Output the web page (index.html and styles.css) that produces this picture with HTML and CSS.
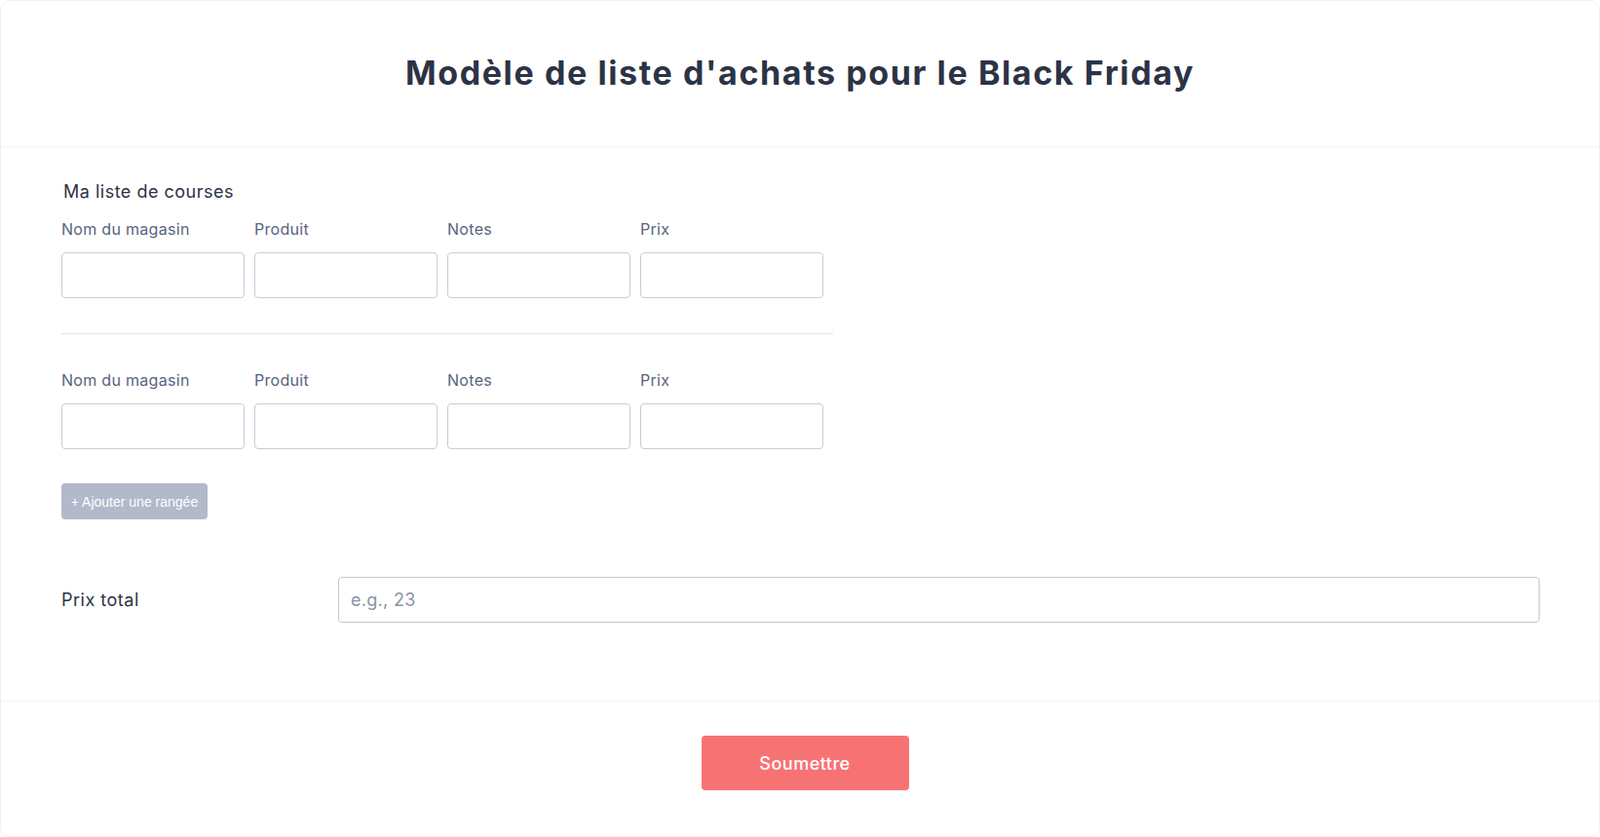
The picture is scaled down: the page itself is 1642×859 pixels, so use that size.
FILE: index.html
```html
<!DOCTYPE html>
<html lang="fr">
<head>
<meta charset="utf-8">
<title>Modèle de liste d'achats pour le Black Friday</title>
<link rel="stylesheet" href="styles.css">
</head>
<body>
<div class="card">
  <header class="header">
    <h1 class="title">Modèle de liste d'achats pour le Black Friday</h1>
  </header>
  <main class="content">
    <div class="matrix-title">Ma liste de courses</div>
    <div class="matrix-row">
      <div class="cell"><label class="cell-label">Nom du magasin</label><input class="cell-input" type="text"></div>
      <div class="cell"><label class="cell-label">Produit</label><input class="cell-input" type="text"></div>
      <div class="cell"><label class="cell-label">Notes</label><input class="cell-input" type="text"></div>
      <div class="cell"><label class="cell-label">Prix</label><input class="cell-input" type="text"></div>
    </div>
    <div class="matrix-divider"></div>
    <div class="matrix-row second">
      <div class="cell"><label class="cell-label">Nom du magasin</label><input class="cell-input" type="text"></div>
      <div class="cell"><label class="cell-label">Produit</label><input class="cell-input" type="text"></div>
      <div class="cell"><label class="cell-label">Notes</label><input class="cell-input" type="text"></div>
      <div class="cell"><label class="cell-label">Prix</label><input class="cell-input" type="text"></div>
    </div>
    <button class="add-row" type="button">+ Ajouter une rangée</button>
    <div class="total-row">
      <label class="total-label">Prix total</label>
      <input class="total-input" type="text" placeholder="e.g., 23">
    </div>
  </main>
  <footer class="footer">
    <button class="submit" type="button">Soumettre</button>
  </footer>
</div>
</body>
</html>
```

FILE: styles.css
```css
* { box-sizing: border-box; }

html, body {
  margin: 0;
  padding: 0;
  background: #ffffff;
}

body {
  font-family: Inter, "Noto Sans", sans-serif;
  color: #2c3345;
}

.card {
  width: 1642px;
  height: 859px;
  border: 1px solid #f0f0f9;
  border-radius: 10px;
  background: #ffffff;
  display: flex;
  flex-direction: column;
  overflow: hidden;
}

.header {
  height: 150px;
  flex: none;
  display: flex;
  align-items: center;
  justify-content: center;
  border-bottom: 1px solid #f3f3fe;
}

.title {
  margin: 0;
  font-size: 34px;
  line-height: 40px;
  font-weight: 700;
  letter-spacing: 1.6px;
  color: #2c3345;
  padding-bottom: 2px;
}

.content {
  flex: 1;
  padding: 34px 61px 0 62px;
}

.matrix-title {
  font-size: 18px;
  line-height: 24px;
  letter-spacing: 0.5px;
  color: #2c3345;
  padding-left: 2px;
  margin-bottom: 16px;
}

.matrix-row {
  display: flex;
  width: 792px;
}

.matrix-row.second {
  margin-top: 37px;
}

.cell {
  width: 198px;
  padding-right: 10px;
  display: flex;
  flex-direction: column;
}

.cell-label {
  font-size: 16px;
  line-height: 20px;
  letter-spacing: 0.3px;
  color: #57647e;
  margin-bottom: 14px;
}

.cell-input {
  width: 188px;
  height: 47px;
  border: 1px solid #c9ccd6;
  border-radius: 4px;
  background: #fff;
  font-family: inherit;
  font-size: 16px;
  outline: none;
}

.matrix-divider {
  width: 792px;
  height: 1px;
  background: #e3e5ec;
  margin-top: 36px;
}

.add-row {
  display: block;
  margin-top: 35px;
  width: 150px;
  height: 37px;
  border: none;
  border-radius: 4px;
  background: #b1b9cb;
  color: #ffffff;
  font-family: "Liberation Sans", Arial, sans-serif;
  font-size: 14px;
  padding: 0;
}

.total-row {
  display: flex;
  align-items: center;
  margin-top: 59px;
}

.total-label {
  width: 284px;
  flex: none;
  font-size: 18px;
  line-height: 24px;
  letter-spacing: 0.5px;
  padding-top: 1px;
  color: #2c3345;
}

.total-input {
  flex: 1;
  height: 47px;
  border: 1px solid #c3c7d2;
  border-radius: 4px;
  padding: 0 12px;
  font-family: inherit;
  font-size: 18px;
  letter-spacing: 0.3px;
  color: #2c3345;
  outline: none;
}

.total-input::placeholder {
  color: #8a93a6;
}

.footer {
  height: 139px;
  flex: none;
  border-top: 1px solid #f3f3fe;
  display: flex;
  justify-content: center;
  padding-top: 35px;
  padding-left: 10px;
}

.submit {
  width: 213px;
  height: 56px;
  border: none;
  border-radius: 4px;
  background: #f77272;
  color: #ffffff;
  font-family: Inter, sans-serif;
  font-size: 18px;
  font-weight: 500;
  letter-spacing: 0.5px;
}
```
